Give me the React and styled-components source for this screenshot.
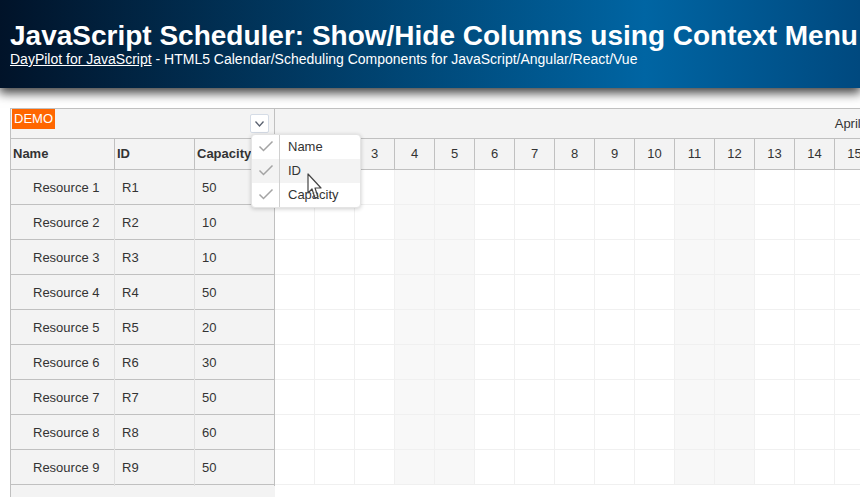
import styled, { createGlobalStyle } from 'styled-components';

const GlobalStyle = createGlobalStyle`
  html, body {
    margin: 0;
    padding: 0;
    height: 100%;
    overflow: hidden;
    background: #fff;
  }
  body {
    font-family: 'Liberation Sans', Arial, sans-serif;
    font-size: 13px;
    color: #333;
  }
`;

const Page = styled.div`
  width: 860px;
  height: 497px;
  overflow: hidden;
  position: relative;
`;

const Header = styled.header`
  height: 88px;
  box-sizing: border-box;
  padding-top: 20px;
  padding-left: 10px;
  background: linear-gradient(to right, #011329 0%, #0065a3 75%, #00497f 100%);
  box-shadow: 0 4px 10px 1px rgba(0, 0, 0, 0.75);
  color: #fff;
  white-space: nowrap;
`;

const Title = styled.h1`
  margin: 0;
  font-size: 28px;
  line-height: 31px;
  font-weight: bold;
`;

const Subtitle = styled.div`
  font-size: 14px;
  line-height: 16px;

  a {
    color: #fff;
    text-decoration: underline;
  }
`;

const Scheduler = styled.div`
  margin: 20px 0 0 10px;
  display: flex;
  width: 1500px;
  height: 389px;
`;

const Side = styled.div`
  width: 265px;
  flex: none;
  box-sizing: border-box;
  border-left: 1px solid #c0c0c0;
  background: #f3f3f3;
`;

const Corner = styled.div`
  position: relative;
  height: 31px;
  box-sizing: border-box;
  border-top: 1px solid #c0c0c0;
  border-bottom: 1px solid #c0c0c0;
  border-right: 1px solid #c0c0c0;
`;

const DemoBadge = styled.div`
  position: absolute;
  top: 0;
  left: 1px;
  width: 43px;
  height: 20px;
  box-sizing: border-box;
  padding-left: 2px;
  background: #ff6600;
  color: #fff;
  font-size: 13px;
  line-height: 19px;
`;

const ColumnsButton = styled.div`
  position: absolute;
  top: 5px;
  right: 5px;
  width: 19px;
  height: 19px;
  box-sizing: border-box;
  display: flex;
  align-items: center;
  justify-content: center;
  background: #fff;
  border: 1px solid #d5dce6;
  border-radius: 2px;
  color: #5a6270;
`;

const Row = styled.div`
  display: grid;
  grid-template-columns: 104px 80px 80px;
  height: ${(p) => p.$height}px;
  box-sizing: border-box;
  border-bottom: 1px solid #c0c0c0;
`;

const HeadCell = styled.div`
  box-sizing: border-box;
  border-right: 1px solid #c0c0c0;
  padding-left: 2px;
  font-weight: bold;
  line-height: 30px;
  white-space: nowrap;
  overflow: hidden;
`;

const Cell = styled.div`
  box-sizing: border-box;
  border-right: 1px solid ${(p) => (p.$last ? '#c0c0c0' : '#e0e0e0')};
  padding-left: ${(p) => p.$indent}px;
  line-height: 36px;
`;

const Main = styled.div`
  flex: 1;
  min-width: 0;
  background: #fff;
`;

const MonthRow = styled.div`
  height: 31px;
  box-sizing: border-box;
  border-top: 1px solid #c0c0c0;
  border-bottom: 1px solid #c0c0c0;
  background: #f3f3f3;
  width: 1200px;
  padding-right: 22px;
  text-align: center;
  line-height: 29px;
`;

const Days = styled.div`
  display: flex;
  height: 31px;
  box-sizing: border-box;
  border-bottom: 1px solid #c0c0c0;
  background: #f3f3f3;
  width: 1200px;
`;

const Day = styled.div`
  width: 40px;
  flex: none;
  box-sizing: border-box;
  border-right: 1px solid #c0c0c0;
  text-align: center;
  line-height: 30px;
`;

const GridRow = styled.div`
  display: flex;
  height: 35px;
  box-sizing: border-box;
  border-bottom: 1px solid #f0f0f0;
  width: 1200px;
`;

const GridCell = styled.div`
  width: 40px;
  flex: none;
  box-sizing: border-box;
  border-right: 1px solid #f0f0f0;
  background: ${(p) => (p.$weekend ? '#f8f8f8' : '#fff')};
`;

const Menu = styled.div`
  position: absolute;
  top: 134px;
  left: 251px;
  width: 110px;
  box-sizing: border-box;
  background: #fff;
  border: 1px solid #e4e4e4;
  border-radius: 4px;
  box-shadow: 0 1px 4px rgba(0, 0, 0, 0.2);
`;

const MenuItem = styled.div`
  display: flex;
  height: 24px;
  align-items: center;
  background: ${(p) => (p.$hover ? '#f3f3f3' : 'transparent')};
`;

const MenuCheck = styled.div`
  width: 28px;
  height: 100%;
  flex: none;
  box-sizing: border-box;
  border-right: 1px solid #d0d0d0;
  display: flex;
  align-items: center;
  justify-content: center;
  padding-bottom: 3px;
  color: #a4a4a4;
`;

const MenuLabel = styled.div`
  padding: 0 0 2px 8px;
  font-size: 13px;
`;

const Cursor = styled.svg`
  position: absolute;
  top: 173px;
  left: 307px;
`;

const resources = [
  ['Resource 1', 'R1', 50],
  ['Resource 2', 'R2', 10],
  ['Resource 3', 'R3', 10],
  ['Resource 4', 'R4', 50],
  ['Resource 5', 'R5', 20],
  ['Resource 6', 'R6', 30],
  ['Resource 7', 'R7', 50],
  ['Resource 8', 'R8', 60],
  ['Resource 9', 'R9', 50],
];

const days = Array.from({ length: 30 }, (_, i) => i + 1);
const isWeekend = (d) => d % 7 === 4 || d % 7 === 5;

const Check = () => (
  <svg width="16" height="12" viewBox="0 0 16 12" fill="none" stroke="currentColor" strokeWidth="1.5">
    <path d="M1.5 6.5 L5.5 10.5 L14.5 1.5" />
  </svg>
);

export default function App() {
  return (
    <Page>
      <GlobalStyle />
      <Header>
        <Title>JavaScript Scheduler: Show/Hide Columns using Context Menu</Title>
        <Subtitle>
          <a href="#daypilot">DayPilot for JavaScript</a> - HTML5 Calendar/Scheduling Components for JavaScript/Angular/React/Vue
        </Subtitle>
      </Header>

      <Scheduler>
        <Side>
          <Corner>
            <DemoBadge>DEMO</DemoBadge>
            <ColumnsButton>
              <svg width="9" height="6" viewBox="0 0 9 6" fill="none" stroke="currentColor" strokeWidth="1.3">
                <path d="M0.5 0.5 L4.5 5 L8.5 0.5" />
              </svg>
            </ColumnsButton>
          </Corner>
          <Row $height={31}>
            <HeadCell>Name</HeadCell>
            <HeadCell>ID</HeadCell>
            <HeadCell>Capacity</HeadCell>
          </Row>
          {resources.map(([name, id, capacity]) => (
            <Row key={id} $height={35}>
              <Cell $indent={22}>{name}</Cell>
              <Cell $indent={7}>{id}</Cell>
              <Cell $indent={7} $last>{capacity}</Cell>
            </Row>
          ))}
        </Side>

        <Main>
          <MonthRow>April 2025</MonthRow>
          <Days>
            {days.map((d) => (
              <Day key={d}>{d}</Day>
            ))}
          </Days>
          {resources.map(([, id]) => (
            <GridRow key={id}>
              {days.map((d) => (
                <GridCell key={d} $weekend={isWeekend(d)} />
              ))}
            </GridRow>
          ))}
        </Main>
      </Scheduler>

      <Menu>
        <MenuItem>
          <MenuCheck><Check /></MenuCheck>
          <MenuLabel>Name</MenuLabel>
        </MenuItem>
        <MenuItem $hover>
          <MenuCheck><Check /></MenuCheck>
          <MenuLabel>ID</MenuLabel>
        </MenuItem>
        <MenuItem>
          <MenuCheck><Check /></MenuCheck>
          <MenuLabel>Capacity</MenuLabel>
        </MenuItem>
      </Menu>

      <Cursor width="16" height="28" viewBox="0 0 16 28">
        <path
          d="M1 1 L1 20 L5 16 L8 25 L11 24 L8 15 L14 15 Z"
          fill="#fff"
          fillOpacity="0.8"
          stroke="#444"
          strokeWidth="1.2"
          strokeLinejoin="round"
        />
      </Cursor>
    </Page>
  );
}
